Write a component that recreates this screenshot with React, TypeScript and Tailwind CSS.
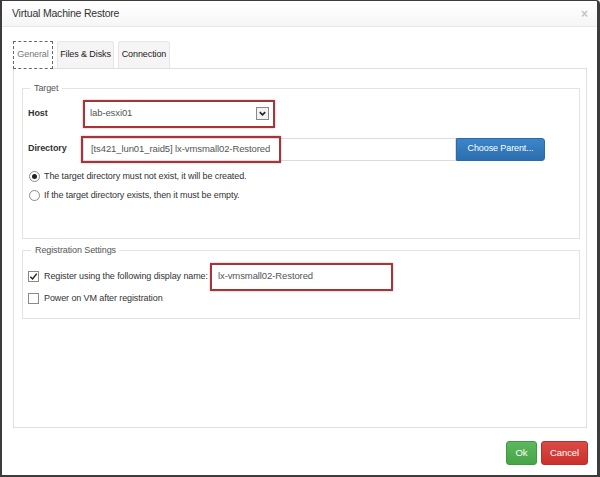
import React from 'react';

const font = { fontFamily: '"Liberation Sans", Arial, sans-serif' };

function Radio({ checked }: { checked?: boolean }) {
  return (
    <span className="flex h-[11px] w-[11px] shrink-0 items-center justify-center rounded-full border border-[#8a8a8a] bg-white">
      {checked && <span className="h-[5px] w-[5px] rounded-full bg-[#222]" />}
    </span>
  );
}

function Checkbox({ checked }: { checked?: boolean }) {
  return (
    <span className="flex h-[11px] w-[11px] shrink-0 items-center justify-center border border-[#8a8a8a] bg-white">
      {checked && (
        <svg viewBox="0 0 10 10" className="h-[9px] w-[9px]">
          <path d="M1.5 5.2 L4 7.8 L8.6 1.8" fill="none" stroke="#222" strokeWidth="1.6" />
        </svg>
      )}
    </span>
  );
}

export default function App() {
  return (
    <div
      style={font}
      className="flex h-[477px] w-[600px] flex-col overflow-hidden rounded-tr-[4px] border-t border-b-2 border-l-2 border-r-[3px] border-[#3c3c3c] bg-white text-[9px] tracking-[-0.1px] text-[#333]"
    >
      {/* Header */}
      <div className="flex h-[26px] shrink-0 items-center justify-between border-b border-[#e8e8e8] bg-gradient-to-b from-white to-[#f6f6f6] pl-[10px] pr-[9px]">
        <span className="text-[10.5px] tracking-[-0.2px] text-[#333]">Virtual Machine Restore</span>
        <span className="text-[12px] font-bold leading-none text-[#c4c4c4]">×</span>
      </div>

      {/* Body */}
      <div className="flex flex-1 flex-col pl-[11px] pr-[9px] pt-[13px]">
        {/* Tabs */}
        <div className="flex h-[28px] items-end gap-[4px]">
          <div className="relative z-10 -mb-px flex h-[28px] w-[40px] items-center justify-center border border-dashed border-[#666] bg-white text-[#777]">
            General
          </div>
          <div className="flex h-[27px] w-[57px] items-center justify-center rounded-t-[3px] border border-b-0 border-[#e6e6e6] bg-[#f6f4f4] text-[#222]">
            Files &amp; Disks
          </div>
          <div className="flex h-[27px] w-[52px] items-center justify-center rounded-t-[3px] border border-b-0 border-[#e6e6e6] bg-[#f6f4f4] text-[#222]">
            Connection
          </div>
        </div>

        {/* Panel */}
        <div className="flex h-[360px] w-[574px] flex-col border border-[#e0e0e0] px-[8px] pt-[13px]">
          <fieldset className="h-[157px] w-[558px] border border-[#e3e3e3] px-[5px]">
            <legend className="ml-[2px] px-[4px] text-[#555]">Target</legend>

            <div className="mt-[4px] flex h-[28px] items-center">
              <span className="w-[55px] font-bold text-[#333]">Host</span>
              <div className="flex h-[28px] w-[192px] items-center border-2 border-[#a8343a] shadow-[0_0_2px_rgba(0,0,0,0.3)]">
                <div className="flex h-[24px] w-full items-center justify-between bg-white pl-[5px] pr-[4px] text-[9.5px] text-[#555]">
                  <span>lab-esxi01</span>
                  <span className="flex h-[13px] w-[13px] items-center justify-center border border-[#888] bg-[#f3f3f3]">
                    <svg viewBox="0 0 10 10" className="h-[9px] w-[9px]">
                      <path d="M2 3.5 L5 6.5 L8 3.5" fill="none" stroke="#222" strokeWidth="1.8" />
                    </svg>
                  </span>
                </div>
              </div>
            </div>

            <div className="mt-[8px] flex h-[27px] items-center">
              <span className="w-[55px] font-bold text-[#333]">Directory</span>
              <div className="relative flex h-[23px] items-stretch">
                <div className="flex w-[373px] items-center border border-[#dcdcdc] bg-white pl-[7px] text-[9.5px] text-[#555]">
                  [ts421_lun01_raid5] lx-vmsmall02-Restored
                </div>
                <button className="flex w-[89px] items-center justify-center rounded-r-[3px] border border-[#2a6aa6] bg-gradient-to-b from-[#3b86c8] to-[#2c6eae] text-white">
                  Choose Parent...
                </button>
                <span className="pointer-events-none absolute left-[-2px] top-[-2px] h-[27px] w-[200px] border-2 border-[#a8343a] shadow-[0_0_2px_rgba(0,0,0,0.3)]" />
              </div>
            </div>

            <div className="mt-[6px] flex h-[16px] items-center gap-[4px] pl-[1px]">
              <Radio checked />
              <span>The target directory must not exist, it will be created.</span>
            </div>
            <div className="mt-[3px] flex h-[16px] items-center gap-[4px] pl-[1px]">
              <Radio />
              <span>If the target directory exists, then it must be empty.</span>
            </div>
          </fieldset>

          <fieldset className="mt-[5px] h-[75px] w-[558px] border border-[#e3e3e3] px-[5px]">
            <legend className="ml-[3px] px-[4px] text-[#555]">Registration Settings</legend>

            <div className="mt-[5px] flex h-[28px] items-center">
              <Checkbox checked />
              <span className="ml-[5px] w-[166px] whitespace-nowrap">Register using the following display name:</span>
              <div className="flex h-[28px] w-[183px] items-center border-2 border-[#a8343a] bg-white pl-[6px] text-[9.5px] text-[#555] shadow-[0_0_2px_rgba(0,0,0,0.3)]">
                lx-vmsmall02-Restored
              </div>
            </div>
            <div className="flex h-[16px] items-center">
              <Checkbox />
              <span className="ml-[5px]">Power on VM after registration</span>
            </div>
          </fieldset>
        </div>

        {/* Footer */}
        <div className="mt-[13px] flex justify-end gap-[4px]">
          <button className="flex h-[24px] w-[31px] items-center justify-center rounded-[3px] border border-[#3d9a3d] bg-gradient-to-b from-[#5cb85c] to-[#47a447] text-[9.5px] text-white">
            Ok
          </button>
          <button className="flex h-[24px] w-[47px] items-center justify-center rounded-[3px] border border-[#b52f2b] bg-gradient-to-b from-[#dc4a45] to-[#c9302c] text-[9.5px] text-white">
            Cancel
          </button>
        </div>
      </div>
    </div>
  );
}
